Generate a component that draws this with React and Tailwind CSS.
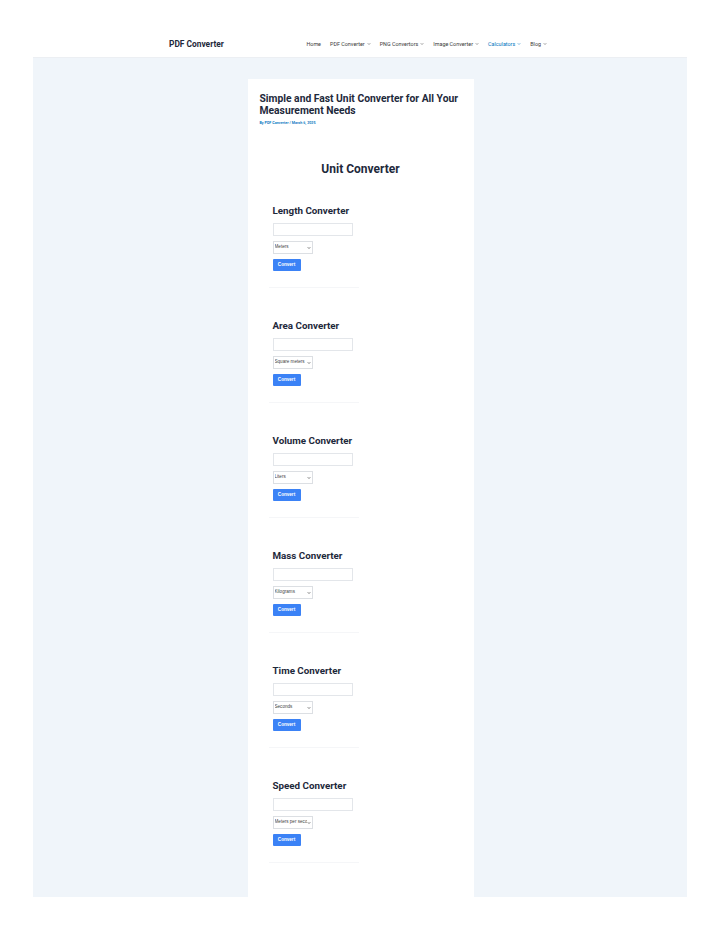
import { ChevronDown } from 'lucide-react'

const navItems = [
  { label: 'Home' },
  { label: 'PDF Converter', menu: true },
  { label: 'PNG Convertors', menu: true },
  { label: 'Image Converter', menu: true },
  { label: 'Calculators', menu: true, active: true },
  { label: 'Blog', menu: true },
]

const converters = [
  { title: 'Length Converter', unit: 'Meters' },
  { title: 'Area Converter', unit: 'Square meters' },
  { title: 'Volume Converter', unit: 'Liters' },
  { title: 'Mass Converter', unit: 'Kilograms' },
  { title: 'Time Converter', unit: 'Seconds' },
  { title: 'Speed Converter', unit: 'Meters per second' },
]

function ConverterBlock({ title, unit }) {
  return (
    <div className="pt-[32px]">
      <div className="pl-[13px]">
        <h3 className="text-[9.8px] leading-[12px] font-bold text-[#1e293b]">{title}</h3>
        <div className="mt-[6px] w-[80px] h-[13px] border border-[#e3e6ea] bg-white" />
        <div className="mt-[5px] w-[40px] h-[13px] border border-[#dcdfe3] bg-white flex items-center pl-[1px] pr-[1px]">
          <span className="flex-1 overflow-hidden whitespace-nowrap text-[4.6px] text-[#444] font-['Liberation_Sans',sans-serif]">
            {unit}
          </span>
          <ChevronDown className="w-[4px] h-[4px] text-[#222] shrink-0" strokeWidth={3.5} />
        </div>
        <button className="mt-[5px] w-[28px] h-[12px] rounded-[1px] bg-[#3b82f6] text-white text-[4.6px] font-bold font-['Liberation_Sans',sans-serif] flex items-center justify-center">
          Convert
        </button>
      </div>
      <div className="mt-[16px] ml-[9px] w-[90px] h-px bg-[#f5f6f8]" />
    </div>
  )
}

export default function App() {
  return (
    <div className="min-h-screen bg-white pt-[32px] px-[33px] font-['Roboto',sans-serif]">
      <div className="bg-[#f0f5fa] h-[865px] flex flex-col">
        <header className="h-[26px] bg-white border-b border-[#eceff3] flex items-center pl-[136px] pr-[140px]">
          <span className="text-[8.4px] font-bold text-[#1e293b]">PDF Converter</span>
          <nav className="ml-auto flex items-center gap-[9px] text-[5.4px] text-[#3a3a3a]">
            {navItems.map((n) => (
              <span
                key={n.label}
                className={`flex items-center gap-[2px] ${n.active ? 'text-[#0274be]' : ''}`}
              >
                {n.label}
                {n.menu && <ChevronDown className="w-[4px] h-[4px]" strokeWidth={3} />}
              </span>
            ))}
          </nav>
        </header>
        <main className="flex-1 flex justify-center pt-[21px] pl-[1px]">
          <article className="w-[226px] bg-white px-[12px] pt-[14px]">
            <h1 className="text-[10.3px] leading-[12px] font-bold text-[#1e293b]">
              Simple and Fast Unit Converter for All Your Measurement Needs
            </h1>
            <p className="mt-[4px] text-[3.7px] leading-[5px] font-semibold text-[#0274be]">
              By PDF Converter / March 6, 2025
            </p>
            <h2 className="mt-[36px] text-center text-[12px] leading-[14px] font-bold text-[#1e293b]">
              Unit Converter
            </h2>
            <div className="-mt-[3px]">
              {converters.map((c) => (
                <ConverterBlock key={c.title} {...c} />
              ))}
            </div>
          </article>
        </main>
      </div>
    </div>
  )
}
